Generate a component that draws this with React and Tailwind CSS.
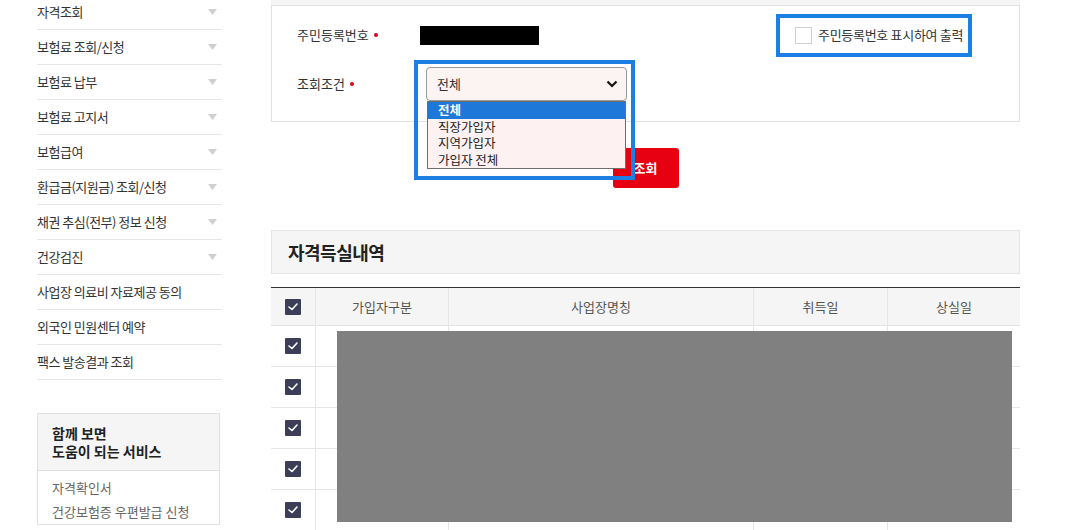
import React from "react";

const font = { fontFamily: '"Noto Sans CJK KR", "Noto Sans", sans-serif' };

const menu = [
  ["자격조회", true],
  ["보험료 조회/신청", true],
  ["보험료 납부", true],
  ["보험료 고지서", true],
  ["보험급여", true],
  ["환급금(지원금) 조회/신청", true],
  ["채권 추심(전부) 정보 신청", true],
  ["건강검진", true],
  ["사업장 의료비 자료제공 동의", false],
  ["외국인 민원센터 예약", false],
  ["팩스 발송결과 조회", false],
];

function Arrow() {
  return (
    <svg width="9" height="6" viewBox="0 0 9 6" className="mr-[5px]">
      <path d="M0 0 H9 L4.5 6 Z" fill="#d0d0d0" />
    </svg>
  );
}

function Check() {
  return (
    <span className="flex h-[16px] w-[16px] items-center justify-center rounded-[1px] bg-[#3c3e58]">
      <svg width="10" height="8" viewBox="0 0 10 8">
        <path d="M1 4 L4 6.5 L9 1" stroke="#fff" strokeWidth="1.6" fill="none" strokeLinecap="round" strokeLinejoin="round" />
      </svg>
    </span>
  );
}

function Dot() {
  return <span className="ml-[5px] inline-block h-[4px] w-[4px] rounded-full bg-[#d0021b]" />;
}

export default function App() {
  const cols = "grid grid-cols-[44px_133px_305px_134px_133px]";
  return (
    <div style={font} className="h-[530px] w-[1069px] overflow-hidden bg-white text-[13px] text-[#333]">
      <div className="flex pl-[37px]">
        {/* Sidebar */}
        <aside className="w-[185px] shrink-0">
          <ul className="-mt-[5px]">
            {menu.map(([t, a]) => (
              <li key={t} className="flex h-[35px] items-center justify-between border-b border-[#e6e6e6] tracking-[-0.5px]">
                <span>{t}</span>
                {a && <Arrow />}
              </li>
            ))}
          </ul>
          <div className="mt-[33px] mr-[2px] border border-[#e0e0e0]">
            <div className="border-b border-[#e0e0e0] bg-[#f5f5f5] px-[14px] py-[10px] text-[14px] font-bold leading-[18px] text-[#222]">
              <div>함께 보면</div>
              <div>도움이 되는 서비스</div>
            </div>
            <div className="px-[14px] pt-[5px] leading-[24px] text-[#666]">
              <div>자격확인서</div>
              <div>건강보험증 우편발급 신청</div>
            </div>
          </div>
        </aside>

        {/* Main */}
        <main className="ml-[49px] w-[749px] shrink-0">
          <div className="h-[5px] bg-[#f5f5f5]" />
          <div className="border border-[#e0e0e0] px-[25px] pt-[12px] pb-[20px]">
            <div className="flex h-[34px] items-center">
              <div className="flex w-[123px] items-center">
                주민등록번호<Dot />
              </div>
              <div className="h-[19px] w-[119px] bg-black" />
              <div className="ml-auto mr-[22px] flex h-[43px] w-[196px] items-center border-[4px] border-[#1b7fe3] pl-[15px]">
                <span className="h-[17px] w-[17px] border border-[#cfcfcf] bg-white" />
                <span className="ml-[6px] tracking-[-0.3px]">주민등록번호 표시하여 출력</span>
              </div>
            </div>
            <div className="mt-[15px] flex h-[34px] items-center">
              <div className="flex w-[123px] items-center">
                조회조건<Dot />
              </div>
              <div className="relative ml-[6px] h-[34px] w-[201px]">
                <div className="flex h-full items-center justify-between rounded-[4px] border border-[#9a9a9a] bg-[#fcf3f3] pl-[10px] pr-[8px]">
                  <span>전체</span>
                  <svg width="12" height="8" viewBox="0 0 12 8">
                    <path d="M1.5 1.5 L6 6 L10.5 1.5" stroke="#111" strokeWidth="2.2" fill="none" />
                  </svg>
                </div>
                <div className="absolute left-[-12px] top-[-7px] z-10 h-[120px] w-[221px] border-[4px] border-[#1b7fe3]" />
                <ul className="absolute left-[1px] top-[34px] z-20 w-[199px] border border-[#6e6e6e] bg-[#fdf1f1] text-[12.5px] leading-[16.5px] text-[#222]">
                  <li className="bg-[#1e78d7] px-[10px] font-bold text-white">전체</li>
                  <li className="px-[10px]">직장가입자</li>
                  <li className="px-[10px]">지역가입자</li>
                  <li className="px-[10px]">가입자 전체</li>
                </ul>
              </div>
            </div>
          </div>

          <div className="mt-[26px] flex justify-center">
            <button className="h-[40px] w-[66px] rounded-[3px] bg-[#e60012] text-[13px] font-bold text-white">조회</button>
          </div>

          <div className="mt-[42px] flex h-[44px] items-center border border-[#e5e5e5] bg-[#f5f5f5] px-[16px] text-[18px] font-bold tracking-[-0.5px] text-[#222]">
            자격득실내역
          </div>

          <div className="mt-[13px] border-t border-[#333]">
            <div className={`${cols} h-[38px] border-b border-[#e2e2e2] bg-[#f5f5f5] text-[#555]`}>
              <div className="flex items-center justify-center"><Check /></div>
              <div className="flex items-center justify-center border-l border-[#e6e6e6]">가입자구분</div>
              <div className="flex items-center justify-center border-l border-[#e6e6e6]">사업장명칭</div>
              <div className="flex items-center justify-center border-l border-[#e6e6e6]">취득일</div>
              <div className="flex items-center justify-center border-l border-[#e6e6e6]">상실일</div>
            </div>
            <div className="relative">
              {[0, 1, 2, 3, 4].map((i) => (
                <div key={i} className={`${cols} h-[41px] border-b border-[#e6e6e6]`}>
                  <div className="flex items-center justify-center"><Check /></div>
                  <div className="border-l border-[#e6e6e6]" />
                  <div className="border-l border-[#e6e6e6]" />
                  <div className="border-l border-[#e6e6e6]" />
                  <div className="border-l border-[#e6e6e6]" />
                </div>
              ))}
              <div className="absolute left-[66px] top-[5px] h-[191px] w-[675px] bg-[#808080]" />
            </div>
          </div>
        </main>
      </div>
    </div>
  );
}
